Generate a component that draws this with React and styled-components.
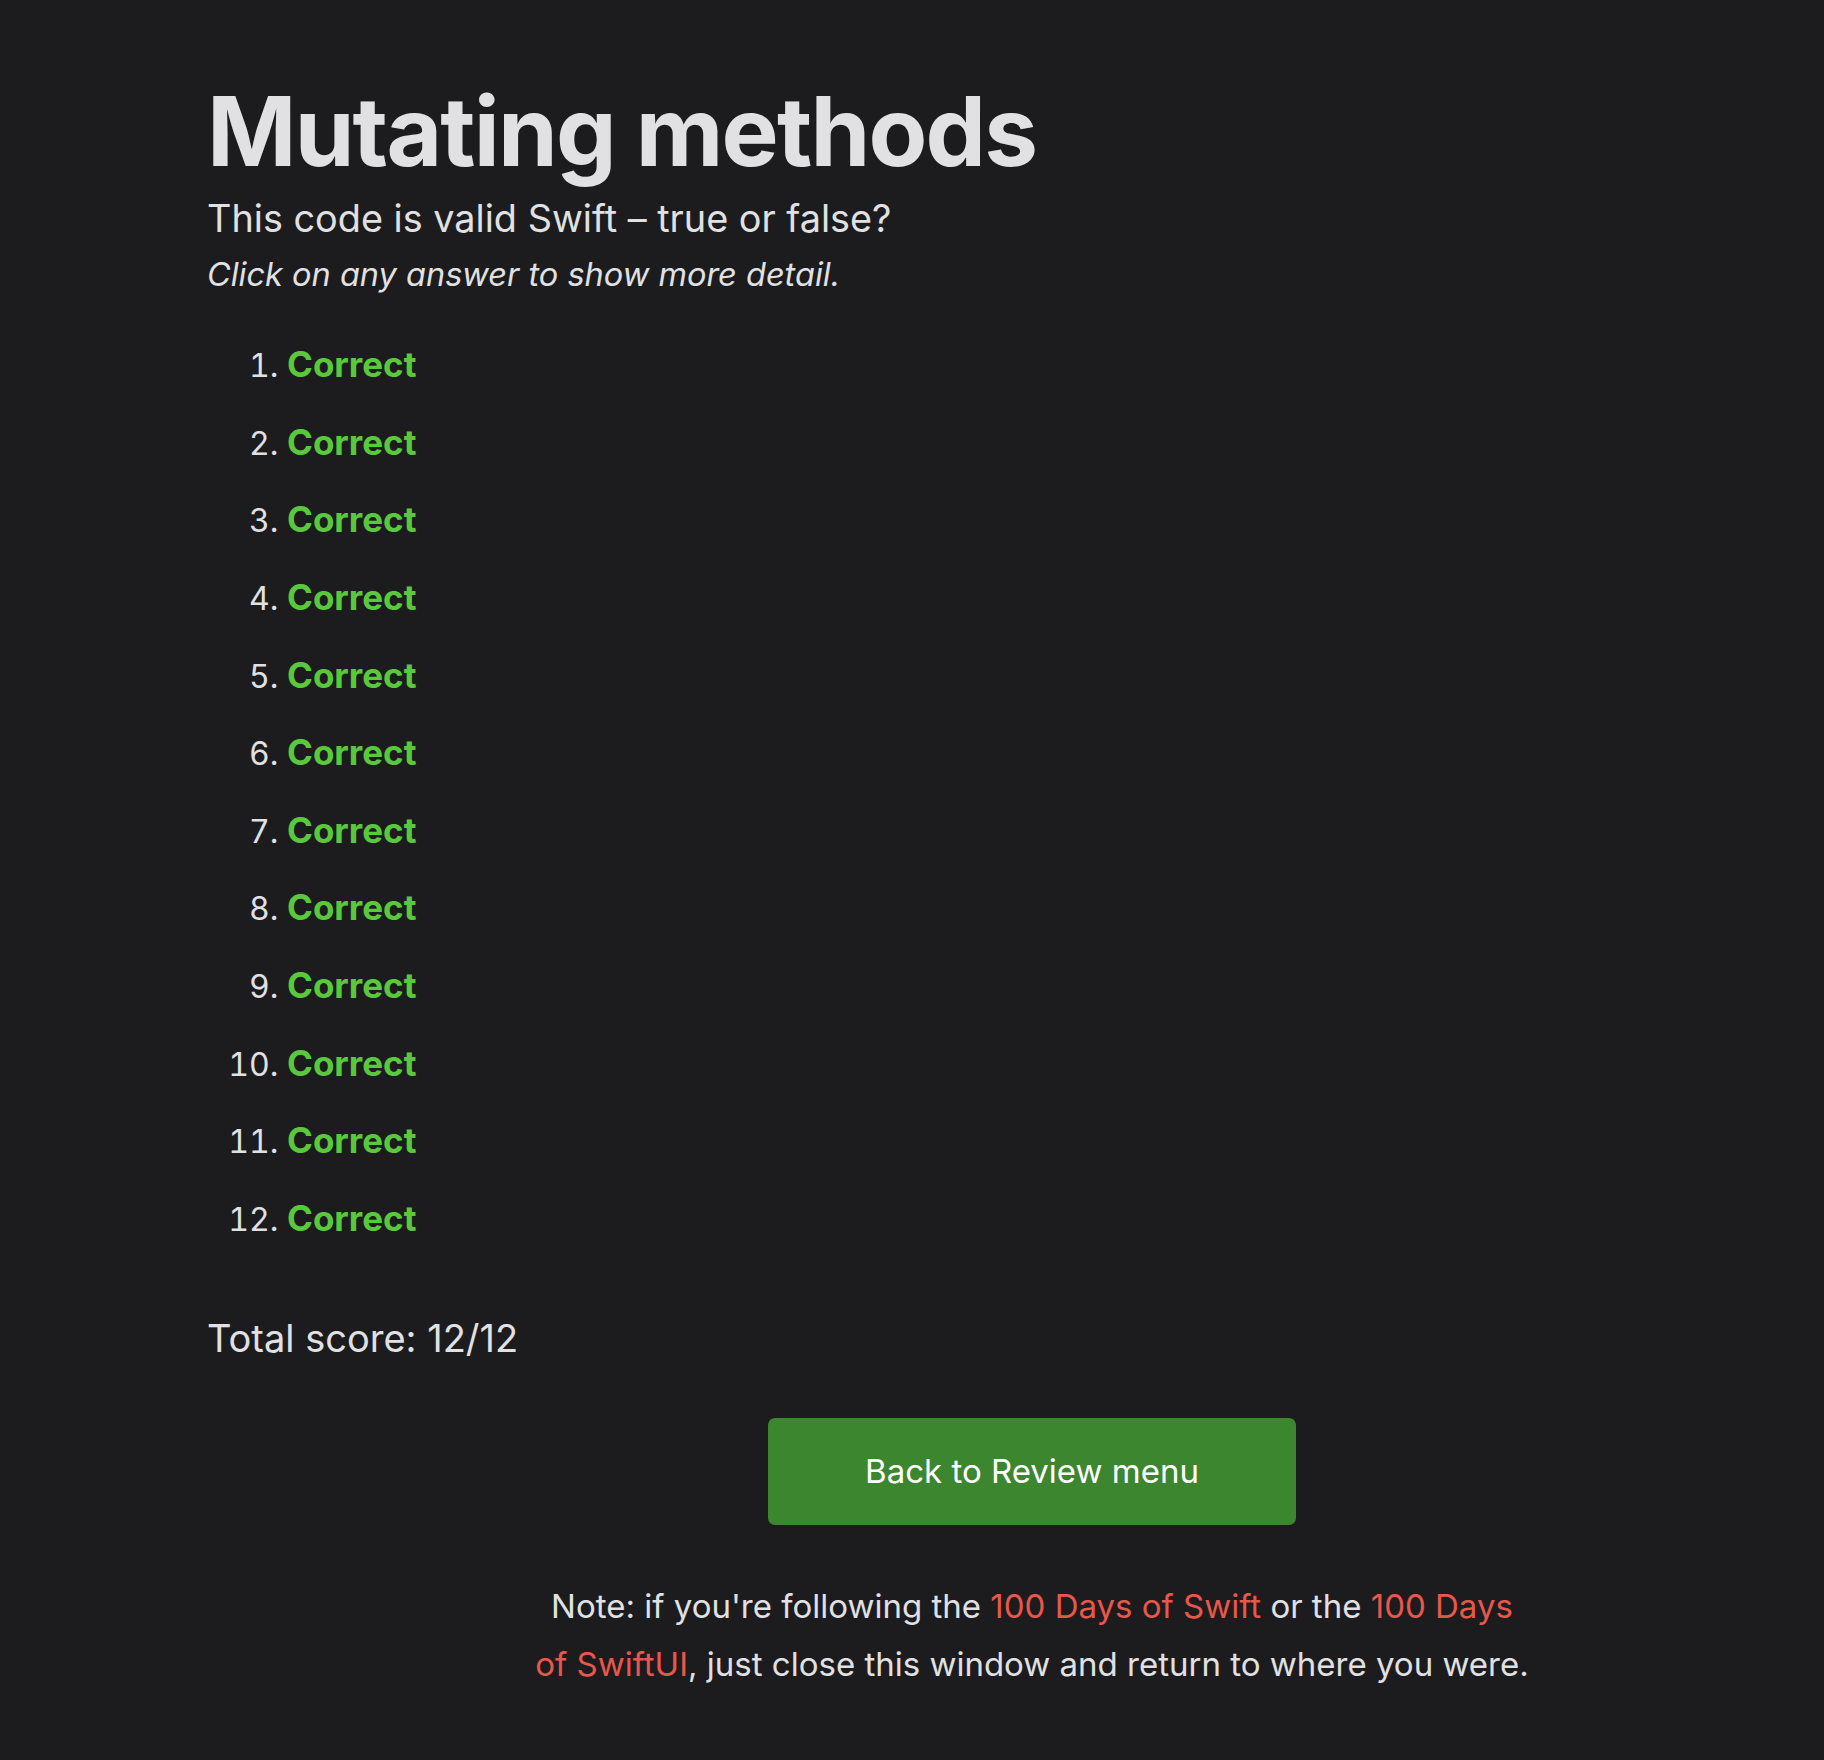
import React from 'react';
import styled, { createGlobalStyle } from 'styled-components';

const GlobalStyle = createGlobalStyle`
  html, body { margin: 0; padding: 0; background: #1c1c1e; overflow-x: hidden; }
  body { font-family: Inter, "Noto Sans", "Liberation Sans", sans-serif; color: #e1e1e3; }
`;

const Page = styled.div`
  min-height: 1760px;
  padding: 74px 0 60px 207px;
  box-sizing: border-box;
`;

const Title = styled.h1`
  margin: 0;
  font-size: 96px;
  font-weight: 700;
  letter-spacing: -1.8px;
  line-height: 1.2;
`;

const Subtitle = styled.p`
  margin: 2px 0 0;
  font-size: 37.8px;
  line-height: 1.45;
`;

const Hint = styled.p`
  margin: 1px 0 0;
  font-size: 32.5px;
  font-style: italic;
  line-height: 1.7;
`;

const Answers = styled.ol`
  margin: 40px 0 0;
  padding-left: 80px;
  font-size: 32px;
  line-height: 45px;
`;

const Answer = styled.li`
  margin-bottom: 31.6px;
  &::marker { color: #e1e1e3; }
`;

const Verdict = styled.span`
  color: ${p => (p.ok ? '#5ac83c' : '#e8574a')};
  font-size: 35px;
  font-weight: 700;
`;

const Score = styled.p`
  margin: 73px 0 0;
  font-size: 38px;
`;

const Footer = styled.div`
  display: flex;
  flex-direction: column;
  align-items: center;
  padding-left: 33px;
`;

const BackButton = styled.button`
  margin-top: 57px;
  width: 528px;
  height: 107px;
  border: none;
  border-radius: 7px;
  background: #3c8630;
  color: #ffffff;
  font-family: inherit;
  font-size: 33px;
  cursor: pointer;
`;

const Note = styled.p`
  margin: 52px 0 0;
  max-width: 995px;
  text-align: center;
  font-size: 33px;
  line-height: 58px;
`;

const Link = styled.a`
  color: #e8574a;
  text-decoration: none;
`;

const answers = Array.from({ length: 12 }, () => true);

export default function App() {
  return (
    <>
      <GlobalStyle />
      <Page>
        <Title>Mutating methods</Title>
        <Subtitle>This code is valid Swift – true or false?</Subtitle>
        <Hint>Click on any answer to show more detail.</Hint>
        <Answers>
          {answers.map((ok, i) => (
            <Answer key={i}>
              <Verdict ok={ok}>{ok ? 'Correct' : 'Wrong'}</Verdict>
            </Answer>
          ))}
        </Answers>
        <Score>Total score: 12/12</Score>
        <Footer>
          <BackButton>Back to Review menu</BackButton>
          <Note>
            Note: if you're following the <Link href="#">100 Days of Swift</Link> or the{' '}
            <Link href="#">100 Days of SwiftUI</Link>, just close this window and return to where you were.
          </Note>
        </Footer>
      </Page>
    </>
  );
}
